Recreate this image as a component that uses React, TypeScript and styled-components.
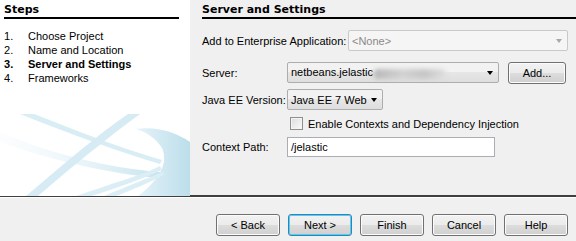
import React from 'react';
import styled, { createGlobalStyle } from 'styled-components';

const Global = createGlobalStyle`
  html, body {
    margin: 0;
    padding: 0;
    background: #f0f0f0;
  }
  body {
    font-family: "Liberation Sans", Arial, sans-serif;
    font-size: 11px;
    color: #000;
  }
`;

const Wizard = styled.div`
  width: 576px;
  height: 241px;
  display: flex;
  flex-direction: column;
  background: #f0f0f0;
  overflow: hidden;
`;

const Main = styled.div`
  display: flex;
  height: 196px;
`;

const StepsPanel = styled.div`
  position: relative;
  flex: none;
  width: 190px;
  background: #fff;
  padding: 4px 11px 0 4px;
  box-sizing: border-box;
  overflow: hidden;
`;

const Heading = styled.div`
  font-family: "DejaVu Sans", Verdana, sans-serif;
  font-weight: bold;
  font-size: 11px;
  line-height: 12px;
  padding-bottom: 1px;
  border-bottom: 2px solid #000;
`;

const StepList = styled.ol`
  list-style: none;
  margin: 10px 0 0;
  padding: 0;
  position: relative;
  z-index: 1;
`;

const Step = styled.li<{ $current?: boolean }>`
  display: flex;
  height: 14px;
  line-height: 14px;
  font-weight: ${(p) => (p.$current ? 'bold' : 'normal')};
  span:first-child {
    width: 24px;
  }
`;

const Decoration = styled.svg`
  position: absolute;
  left: 0;
  bottom: 0;
`;

const Content = styled.div`
  flex: 1;
  min-width: 0;
  padding: 4px 0 0 12px;
`;

const Form = styled.div`
  display: flex;
  flex-direction: column;
  padding-right: 8px;
`;

const FormRow = styled.div<{ $top: number; $h?: number }>`
  display: flex;
  align-items: center;
  margin-top: ${(p) => p.$top}px;
  height: ${(p) => p.$h ?? 21}px;
`;

const Label = styled.span<{ $w?: number }>`
  white-space: nowrap;
  width: ${(p) => (p.$w ? `${p.$w}px` : 'auto')};
  flex: none;
`;

const Combo = styled.div<{ $w: number; $disabled?: boolean }>`
  width: ${(p) => p.$w}px;
  flex: none;
  height: 21px;
  box-sizing: border-box;
  border: 1px solid ${(p) => (p.$disabled ? '#c9c9c9' : '#adadad')};
  border-radius: 2px;
  background: ${(p) =>
    p.$disabled ? '#f5f5f5' : 'linear-gradient(#f2f2f2, #f2f2f2 50%, #e6e6e6 50%, #dedede)'};
  color: ${(p) => (p.$disabled ? '#8a8a8a' : '#000')};
  display: flex;
  align-items: center;
  padding: 0 5px 0 3px;
  justify-content: space-between;
  white-space: nowrap;
`;

const Arrow = styled.span<{ $disabled?: boolean }>`
  flex: none;
  width: 0;
  height: 0;
  margin-left: 4px;
  border-left: 3.5px solid transparent;
  border-right: 3.5px solid transparent;
  border-top: 4px solid ${(p) => (p.$disabled ? '#a8a8a8' : '#000')};
  margin-top: 1px;
`;

const Blurred = styled.span`
  display: inline-block;
  vertical-align: middle;
  width: 72px;
  height: 10px;
  margin-left: 1px;
  background: linear-gradient(90deg, #b8b8b8, #d2d2d2 40%, #c6c6c6 70%, #e0e0e0);
  filter: blur(2px);
  border-radius: 4px;
`;

const Button = styled.button<{ $default?: boolean; $w?: number }>`
  width: ${(p) => p.$w ?? 64}px;
  height: 22px;
  flex: none;
  box-sizing: border-box;
  border: 1px solid ${(p) => (p.$default ? '#3c7fb1' : '#707070')};
  border-radius: 3px;
  box-shadow: inset 0 0 0 1px ${(p) => (p.$default ? '#48d2fb' : '#fcfcfc')};
  background: linear-gradient(#f2f2f2, #ebebeb 50%, #dddddd 50%, #cfcfcf);
  font-family: "Liberation Sans", Arial, sans-serif;
  font-size: 11px;
  color: #000;
  padding: 0;
`;

const Check = styled.span`
  width: 13px;
  height: 13px;
  flex: none;
  box-sizing: border-box;
  border: 1px solid #8f8f8f;
  background: linear-gradient(135deg, #dcdcdc, #fbfbfb);
  box-shadow: inset 0 0 0 1px #f4f4f4;
  margin: 0 5px 0 88px;
`;

const TextField = styled.div`
  width: 208px;
  height: 20px;
  box-sizing: border-box;
  border: 1px solid #abadb3;
  background: #fff;
  padding-left: 3px;
  line-height: 18px;
`;

const Separator = styled.div`
  height: 2px;
  background: #3f3f3f;
  border-bottom: 1px solid #fff;
  margin-top: -1px;
`;

const ButtonBar = styled.div`
  display: flex;
  justify-content: flex-end;
  gap: 8px;
  padding: 16px 8px 0 0;
`;

const steps = ['Choose Project', 'Name and Location', 'Server and Settings', 'Frameworks'];

export default function App(): JSX.Element {
  return (
    <Wizard>
      <Global />
      <Main>
        <StepsPanel>
          <Heading>Steps</Heading>
          <StepList>
            {steps.map((s, i) => (
              <Step key={s} $current={i === 2}>
                <span>{i + 1}.</span>
                <span>{s}</span>
              </Step>
            ))}
          </StepList>
          <Decoration width="190" height="84" viewBox="0 0 190 84">
            <defs>
              <linearGradient id="sw1" x1="0" y1="0" x2="1" y2="0">
                <stop offset="0" stopColor="#eef7fb" stopOpacity="0.2" />
                <stop offset="1" stopColor="#c8e4ef" />
              </linearGradient>
              <linearGradient id="sw2" x1="0" y1="0" x2="1" y2="0">
                <stop offset="0" stopColor="#e6f3f9" />
                <stop offset="1" stopColor="#bcdeeb" />
              </linearGradient>
            </defs>
            <path d="M0 30 C50 48 110 62 160 66 L160 60 C110 56 50 42 0 20 Z" fill="url(#sw1)" />
            <path d="M20 2 C70 22 120 40 160 52 L162 48 C120 36 75 18 34 2 Z" fill="#d9edf5" />
            <path d="M38 84 C75 52 110 24 140 2 L128 2 C96 24 64 52 26 84 Z" fill="#d6ebf4" />
            <path d="M136 17 C160 14 178 22 190 30 L190 84 L138 84 C162 66 168 49 162 36 C156 26 146 20 136 17 Z" fill="url(#sw2)" />
            <path d="M76 84 C110 72 140 64 160 54 L162 58 C140 68 116 76 92 84 Z" fill="#dbeef6" />
            <path d="M104 84 C128 74 148 66 163 60 L164 63 C150 70 132 78 116 84 Z" fill="#dbeef6" />
          </Decoration>
        </StepsPanel>
        <Content>
          <Heading>Server and Settings</Heading>
          <Form>
            <FormRow $top={11} style={{ justifyContent: 'space-between' }}>
              <Label>Add to Enterprise Application:</Label>
              <Combo $w={220} $disabled>
                <span>&lt;None&gt;</span>
                <Arrow $disabled />
              </Combo>
            </FormRow>
            <FormRow $top={11}>
              <Label $w={85}>Server:</Label>
              <Combo $w={212}>
                <span>
                  netbeans.jelastic
                  <Blurred />
                </span>
                <Arrow />
              </Combo>
              <Button $w={58} style={{ marginLeft: 9 }}>
                Add...
              </Button>
            </FormRow>
            <FormRow $top={6}>
              <Label $w={85}>Java EE Version:</Label>
              <Combo $w={96}>
                <span>Java EE 7 Web</span>
                <Arrow />
              </Combo>
            </FormRow>
            <FormRow $top={7} $h={13}>
              <Check />
              <span>Enable Contexts and Dependency Injection</span>
            </FormRow>
            <FormRow $top={7} $h={20}>
              <Label $w={85}>Context Path:</Label>
              <TextField>/jelastic</TextField>
            </FormRow>
          </Form>
        </Content>
      </Main>
      <Separator />
      <ButtonBar>
        <Button>&lt; Back</Button>
        <Button $default>Next &gt;</Button>
        <Button>Finish</Button>
        <Button>Cancel</Button>
        <Button>Help</Button>
      </ButtonBar>
    </Wizard>
  );
}
